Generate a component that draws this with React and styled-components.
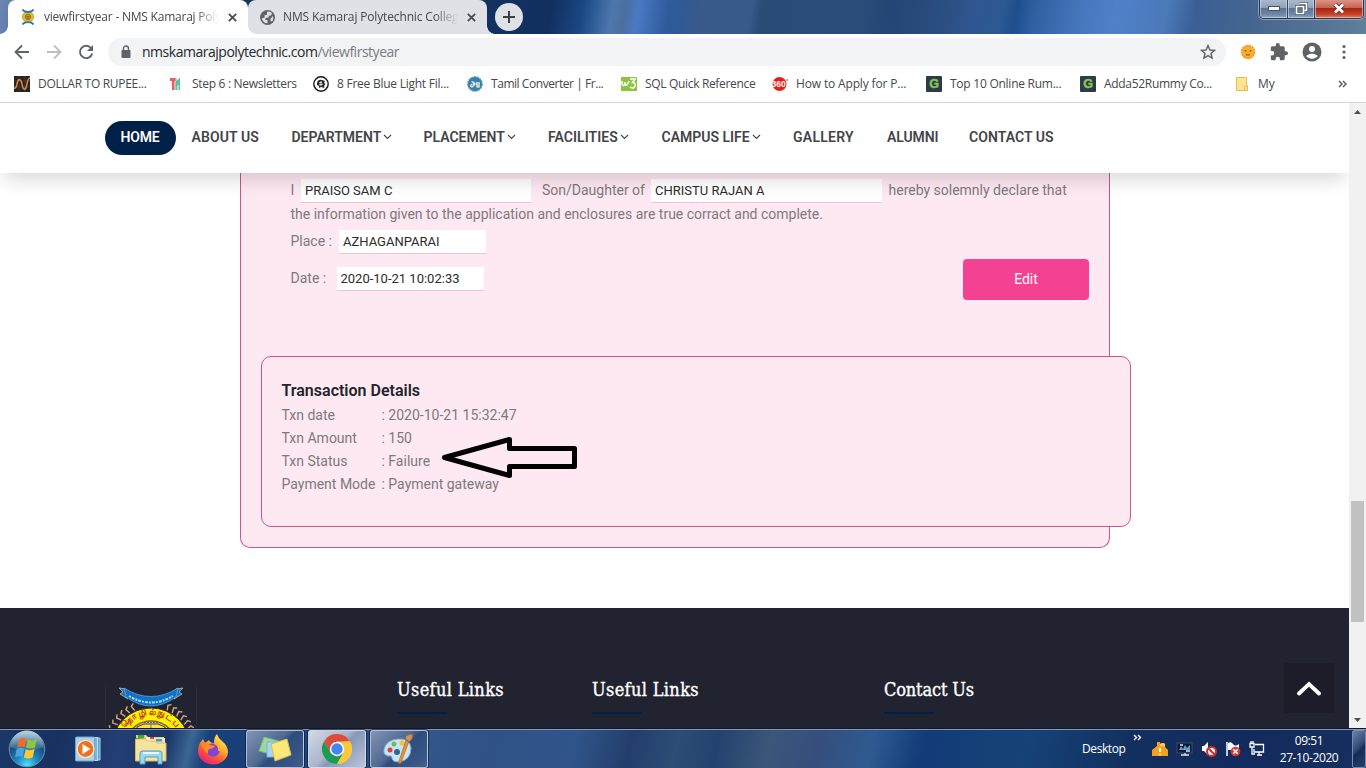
import React from "react";
import styled, { createGlobalStyle } from "styled-components";

const Global = createGlobalStyle`
  *{box-sizing:border-box}
  body{margin:0;overflow:hidden;background:#fff}
  svg{display:block;flex:none}
`;
const ui = `"Open Sans","Noto Sans",sans-serif`;

const Screen = styled.div`
  width:1366px;height:768px;display:flex;flex-direction:column;overflow:hidden;
  font-family:Roboto,sans-serif;
`;

/* ---------- browser chrome ---------- */
const TitleBar = styled.header`
  height:34px;flex:none;display:flex;padding-left:8px;font-family:${ui};
  background:linear-gradient(100deg,#6c86b4 0,#5c78aa 20px,#143264 240px,#12305f 545px,#1a4782 575px,#4d78ae 605px,#4a6f9f 618px,#4b7ac4 630px,#2e5b9c 660px,#2f5a96 674px,#395a8b 690px,#38598a 742px,#2a4b76 752px,#2b4d7a 850px,#244575 880px,#2b4e80 930px,#2f5690 960px,#2c5892 990px,#1d4e8d 1003px,#2f5f9f 1020px,#4474b8 1060px,#5080c8 1100px,#4b7aba 1150px,#3a5f94 1180px,#466690 1240px,#5c7c98 1340px,#6a8a9c 1366px);
`;
const Tab = styled.div`
  position:relative;width:${p => p.$w}px;height:34px;display:flex;align-items:center;
  padding:0 11px 0 ${p => p.$pl}px;background:${p => p.$bg};border-radius:8px 8px 0 0;
  &::before,&::after{content:"";position:absolute;bottom:0;width:8px;height:8px;z-index:2}
  &::before{left:-8px;background:radial-gradient(circle at 0 0,transparent 7.5px,${p => p.$bg} 8px);display:${p => p.$active ? "block" : "none"}}
  &::after{right:-8px;background:radial-gradient(circle at 100% 0,transparent 7.5px,${p => p.$bg} 8px)}
`;
const TabTitle = styled.span`
  width:${p => p.$w}px;margin-left:${p => p.$ml}px;overflow:hidden;white-space:nowrap;
  font-size:12px;line-height:18px;letter-spacing:${p => p.$ls}px;color:#45484c;
  mask-image:linear-gradient(90deg,#000 86%,transparent);
`;
const TabClose = styled.span`margin-left:auto;display:flex;`;
const NewTab = styled.div`
  width:28px;height:28px;border-radius:50%;background:#dee1e6;margin:3px 0 0 8px;
  display:grid;place-items:center;
`;
const WinButtons = styled.div`
  margin:-1px 2px 0 auto;width:105px;height:20px;display:flex;border:1px solid #26344a;border-top:0;
  border-radius:0 0 5px 5px;overflow:hidden;box-shadow:0 0 0 1px rgba(220,232,245,.45);
`;
const WinButton = styled.div`
  flex:0 0 ${p => p.$w}px;display:grid;place-items:center;border-right:1px solid #33435d;
  box-shadow:inset 0 0 0 1px rgba(225,233,243,.55);
  background:${p => p.$close
    ? "linear-gradient(#dc9b8f 0,#c9614e 46%,#a52613 50%,#c5402a 80%,#dc8062)"
    : "linear-gradient(#aebcd0 0,#8fa1ba 46%,#5d7493 50%,#6c87a6 80%,#8aa8c4)"};
  &:last-child{border-right:0;flex:1}
`;
const Toolbar = styled.div`
  height:36px;flex:none;display:flex;align-items:center;padding:0 12px 0 14px;background:#fff;font-family:${ui};
`;
const NavIcons = styled.div`display:flex;gap:16px;width:94px;`;
const Omnibox = styled.div`
  flex:none;width:1118px;height:28px;border-radius:14px;background:#f1f3f4;display:flex;align-items:center;
  padding:0 10px 0 12px;
`;
const Url = styled.span`
  font-size:14px;letter-spacing:${p => p.$ls}px;line-height:20px;color:#26282b;margin-left:10px;
  i{font-style:normal;color:#777b80}
`;
const Star = styled.span`margin-left:auto;`;
const Actions = styled.div`display:flex;align-items:center;margin-left:14px;gap:14px;`;
const Bookmarks = styled.div`
  height:33px;flex:none;display:flex;align-items:center;padding:0 18px 5px 14px;border-bottom:1px solid #d4d5d7;
  background:#fff;font-family:${ui};
`;
const Bookmark = styled.div`
  flex:0 0 ${p => p.$w}px;display:flex;align-items:center;gap:8px;font-size:12px;line-height:18px;
  color:#45484c;white-space:nowrap;letter-spacing:${p => p.$ls}px;
`;
const More = styled.span`margin-left:auto;`;

/* ---------- page ---------- */
const Viewport = styled.div`height:625px;flex:none;display:flex;overflow:hidden;`;
const Page = styled.main`flex:1;display:flex;flex-direction:column;background:#fff;min-width:0;overflow:hidden;`;
const Nav = styled.nav`
  position:relative;z-index:2;height:70px;flex:none;display:flex;align-items:center;padding-left:105px;
  background:#fff;box-shadow:0 10px 20px -4px rgba(0,0,0,.16);
`;
const NavItem = styled.a`
  height:34px;margin-top:-1px;display:flex;align-items:center;flex:0 0 ${p => p.$w}px;padding:0 0 2px 15.5px;gap:2px;
  font-size:14px;font-weight:600;letter-spacing:${p => p.$ls}px;white-space:nowrap;
  color:${p => p.$on ? "#fff" : "#434446"};background:${p => p.$on ? "#002147" : "transparent"};
  border-radius:17px;
`;
const Body = styled.section`height:435px;flex:none;padding-left:240px;`;
const FormCard = styled.div`
  width:870px;height:375px;border:1px solid #ca5590;border-top:0;border-radius:0 0 10px 10px;background:#fee8f2;
  color:#7d7a7d;font-size:14px;
`;
const Declaration = styled.div`height:183px;padding:5px 20px 0 49.5px;display:flex;flex-direction:column;`;
const Line = styled.div`
  height:${p => p.$h}px;display:flex;align-items:center;white-space:nowrap;
`;
const Label = styled.span`flex:0 0 ${p => p.$w}px;letter-spacing:${p => p.$ls || 0}px;`;
const Field = styled.input`
  width:${p => p.$w}px;height:24px;margin:2px ${p => p.$mr || 0}px 0 0;border:0;border-bottom:1px solid #eec4d8;
  background:#fff;padding:0 4px;font:13px Roboto,sans-serif;color:#2b2b2b;outline:0;border-radius:0;
`;
const Columns = styled.div`display:flex;justify-content:space-between;align-items:flex-start;`;
const EditButton = styled.button`
  width:126px;height:41px;margin-top:33px;padding:0 0 2px;border:0;border-radius:4px;background:#f44292;color:#fff;
  font:14px Roboto,sans-serif;
`;
const TxnCard = styled.div`
  position:relative;width:870px;height:171px;margin-left:20px;border:1px solid #ca5590;border-radius:10px;
  background:#fee8f2;padding:22px 20px 22px 19.5px;
`;
const TxnTitle = styled.h4`margin:0 0 1px;font-size:16px;line-height:24px;font-weight:600;color:#212529;`;
const TxnRow = styled.div`
  display:grid;grid-template-columns:100px 1fr;font-size:14px;line-height:23px;
`;
const Arrow = styled.svg`position:absolute;left:179px;top:79px;`;

const Footer = styled.footer`
  position:relative;height:120px;flex:none;background:#222330;display:flex;padding-left:105px;
`;
const LogoBox = styled.div`
  width:92px;height:48px;margin:78px 200px 0 0;border:solid #2b2c38;border-width:0 1px;overflow:hidden;
`;
const FooterCol = styled.div`flex:0 0 ${p => p.$w}px;padding-top:70px;`;
const FooterTitle = styled.h3`
  margin:0;font:400 18px/24px "DejaVu Serif Condensed","DejaVu Serif",serif;letter-spacing:${p => p.$ls}px;color:#fff;
  white-space:nowrap;-webkit-text-stroke:.35px #fff;
  &::after{content:"";display:block;width:50px;height:2px;margin-top:10px;background:#002147}
`;
const ToTop = styled.div`
  position:absolute;right:15px;top:55px;width:50px;height:50px;background:#1c1d29;display:grid;place-items:center;
`;
const Scrollbar = styled.div`
  width:17px;flex:none;background:#f1f1f1;display:flex;flex-direction:column;align-items:center;
`;
const ScrollTrack = styled.div`flex:1;width:13px;padding-top:381px;`;
const Thumb = styled.div`height:121px;background:#c1c1c1;`;
const ScrollArrow = styled.div`height:17px;display:grid;place-items:center;`;

/* ---------- taskbar ---------- */
const Taskbar = styled.div`
  height:40px;flex:none;display:flex;align-items:center;border-top:1px solid #10182a;box-shadow:inset 0 1px 0 #8796b4;
  color:#fff;font-family:${ui};padding-left:8px;
  background:linear-gradient(104deg,#1a3768 0,#17325f 60px,#233e74 120px,#1b3668 165px,#3b6693 188px,#17407a 205px,#1a3f75 260px,#33568a 420px,#2f5186 480px,#30558a 560px,#233e6c 615px,#2c4d74 660px,#24426e 700px,#3a5679 750px,#354f7d 800px,#2e5a91 850px,#123b77 900px,#164278 1000px,#12305f 1100px,#132b5c 1200px,#17305f 1366px);
`;
const Launch = styled.div`flex:0 0 ${p => p.$w}px;display:flex;justify-content:center;`;
const PinnedApps = styled.div`display:flex;align-items:center;width:238px;flex:none;`;
const TaskButton = styled.div`
  width:58px;height:38px;margin:1px 4px 0 0;flex:none;display:grid;place-items:center;border-radius:3px;
  border:1px solid rgba(215,226,243,.75);
  box-shadow:0 0 0 1px rgba(10,20,45,.6);
  background:${p => p.$on
    ? "linear-gradient(135deg,#d3d9e6 0,#a9b5cd 45%,#8797b8 55%,#bcc6da 100%)"
    : "linear-gradient(135deg,#8494b3 0,#4f6994 45%,#2e4d7d 55%,#3f5c8a 100%)"};
`;
const Tray = styled.div`margin-left:auto;display:flex;align-items:center;height:38px;font-size:12px;`;
const Desktop = styled.span`letter-spacing:${p => p.$ls}px;width:51px;`;
const TrayChevron = styled.span`align-self:flex-start;padding-top:4px;width:19px;`;
const TrayIcons = styled.div`display:flex;gap:8px;`;
const Clock = styled.div`
  width:86px;text-align:center;line-height:17px;letter-spacing:${p => p.$ls}px;margin-left:1px;
`;
const ShowDesktop = styled.div`
  width:14px;height:38px;border:1px solid #7389ad;border-radius:2px;
  background:linear-gradient(135deg,#6d83a7,#304b7a 45%,#142c5a 55%,#26406d);
`;

const stroke = (d, w = 2, c = "#5f6368") => <path d={d} fill="none" stroke={c} strokeWidth={w} />;

const Emblem = ({ size = 16 }) => (
  <svg width={size} height={size} viewBox="0 0 16 16">
    <circle cx="8" cy="8" r="5.500" fill="#e8c41f" stroke="#b98f1c" strokeWidth=".8" />
    <circle cx="8" cy="8" r="2.800" fill="#c8962f" stroke="#806227" strokeWidth=".8" />
    <path d="M6.500 7.500h3M7 9.200h2" stroke="#685a30" strokeWidth=".8" />
    <path d="M2.500.5Q4 3 8 3T13.500.5M2.500 15.500Q4 13.200 8 13.200T13.500 15.500" fill="none" stroke="#2f76b3" strokeWidth="1.800" />
  </svg>
);
const Close = () => <svg width="9" height="9" viewBox="0 0 9 9">{stroke("M.8.8 8.200 8.200M8.200.8.8 8.200", 1.7, "#45484c")}</svg>;
const Globe = () => (
  <svg width="15" height="15" viewBox="0 0 16 16">
    <circle cx="8" cy="8" r="8" fill="#5f6368" />
    <path d="M7.500 1.800Q11 1.200 12.800 3.500L11.500 6 9.500 5.800 9.200 8 6 8.500 5.500 10.500 8 11V14.200Q3 14 1.900 8.800L5 8 4.800 5.500 7.500 5ZM13.800 6.500Q15 10 12.500 12.500L10.800 10.500 12 8.500Z" fill="#dee1e6" />
  </svg>
);

const marks = {
  dollar: <svg width="16" height="16"><rect width="16" height="16" fill="#262423" /><path d="M0 5h16M0 11h16M5 0v16M11 0v16" stroke="#504a43" strokeWidth=".6" /><path d="M0 12Q2 13 3 8T5 4Q7 3 8 8T10 13Q12 14 13 8T16 2" fill="none" stroke="#e8833a" strokeWidth="1.500" /></svg>,
  th: <svg width="16" height="16"><path d="M2 2h5.500v3H6.500v9H4V5H2Z" fill="#ed5a5f" /><path d="M7.300 6V14H9.500V9.500L10.500 8.500V14H12V1.500L8.500 5V2H7.500Z" fill="#58c1a5" /></svg>,
  head: <svg width="16" height="16"><circle cx="8" cy="8" r="7.200" fill="#fff" stroke="#151515" strokeWidth="1.400" /><path d="M4 7Q5 3 9 4L12 5 11 7 12.500 8 11 10 11.500 12 8 11 6 12 6 10 4 9Z" fill="#262626" /><path d="M6 7 9 6M6 9 10 8M8 5v5" stroke="#ddd" /></svg>,
  tamil: <svg width="16" height="16"><circle cx="8" cy="8" r="7.300" fill="#397fa8" stroke="#6ba5c3" strokeWidth="1.300" strokeDasharray="2 1" /><path d="M5.500 8Q3 9 4 10.500T7 9Q7 5 4.500 6M7 10V6M7 8h3M10 6v5H12V6" fill="none" stroke="#fff" strokeWidth="1.200" /></svg>,
  w3: <svg width="16" height="14"><rect width="16" height="14" fill="#8bc540" /><path d="M1 4V7Q2.500 10 4 7V5M4 7Q5.500 10 7.500 5L8 4M9 2H14L11.500 5.500Q15 5.500 14 9T9 10" fill="none" stroke="#fff" strokeWidth="1.500" /></svg>,
  r360: <svg width="16" height="16"><circle cx="7.500" cy="8" r="7" fill="#e71d17" /><text x="-.5" y="11" fontFamily="Liberation Sans" fontWeight="700" fontSize="8.500" fill="#fff" textLength="14">360</text><circle cx="15" cy="4" r=".8" fill="#e71d17" /></svg>,
  g: <svg width="16" height="16"><rect width="16" height="16" rx="1" fill="#2b3b4b" /><text x="8" y="12.300" textAnchor="middle" fontFamily="Liberation Sans" fontWeight="700" fontSize="12.500" fill="#86c34f" stroke="#86c34f" strokeWidth=".5">G</text></svg>,
  folder: <svg width="16" height="16"><path d="M2.500 1.500h10v8h1v5h-11Z" fill="#ffe493" stroke="#e2bd50" /><path d="M10.500 14V10.500h2" fill="none" stroke="#e2bd50" /></svg>,
};
const bookmarks = [
  ["dollar", "DOLLAR TO RUPEE...", 154, -0.3],
  ["th", "Step 6 : Newsletters", 145, -0.3],
  ["head", "8 Free Blue Light Fil...", 154, -0.25],
  ["tamil", "Tamil Converter | Fr...", 154, -0.45],
  ["w3", "SQL Quick Reference", 151, -0.33],
  ["r360", "How to Apply for P...", 154, -0.15],
  ["g", "Top 10 Online Rum...", 154, -0.25],
  ["g", "Adda52Rummy Co...", 154, -0.3],
  ["folder", "My", 60, -0.1],
];
const menu = [
  ["HOME", 71, -0.15, false], ["ABOUT US", 100, 0.1, false], ["DEPARTMENT", 132, 0, true], ["PLACEMENT", 124.5, 0, true],
  ["FACILITIES", 113.5, 0.05, true], ["CAMPUS LIFE", 131.5, 0, true], ["GALLERY", 94, 0.25, false], ["ALUMNI", 82, -0.1, false], ["CONTACT US", 110, 0.05, false],
];

const Logo = () => (
  <svg width="92" height="48" viewBox="0 0 92 48">
    <defs><path id="arc" d="M14 60A31 31 0 0 1 76 60" /></defs>
    <g stroke="#d0a487" strokeWidth="1.400">
      {[-72, -64, -56, -48, -40, -32, -24, 24, 32, 40, 48, 56, 64, 72].map(a => (
        <path key={a} d="M45 21 43.500 16 46.500 14" fill="none" transform={`rotate(${a} 45 61)`} />
      ))}
    </g>
    <circle cx="45" cy="61" r="39" fill="#fff200" stroke="#342f3c" />
    <circle cx="45" cy="61" r="26" fill="#ddc59a" stroke="#8d651e" strokeWidth="1.500" />
    <path d="M31 48V41L38 38H52L59 41V48Z" fill="#f5e34a" stroke="#514421" />
    <path d="M36 43h18M45 38v10" stroke="#8a7a26" strokeWidth="1" />
    <path d="M38 36.500h14" stroke="#5376a0" strokeWidth="1" strokeDasharray="2 1" />
    <text fontFamily='"Noto Sans",sans-serif' fontSize="8.500" fontWeight="700" fill="#b52b18"><textPath href="#arc" startOffset="9" textLength="76">ர் தொழில்நுட்பக்</textPath></text>
    <path d="M13 2 20 3 22 8 20 11 22 13 14 8 17 6ZM77 2 70 3 68 8 70 11 68 13 76 8 73 6Z" fill="#2571a8" stroke="#b5cdd3" strokeWidth=".7" />
    <path d="M18 2Q45 19 72 2L70 11Q45 29 20 11Z" fill="#1171c7" stroke="#63aee0" strokeWidth=".7" />
    <path d="M23 10Q45 23 67 10" fill="none" stroke="#a8d6f5" strokeWidth="2" strokeDasharray="2 1 3 1" />
  </svg>
);

const StartOrb = () => (
  <svg width="38" height="38" viewBox="0 0 38 38">
    <defs>
      <radialGradient id="orb" cx=".5" cy=".95" r=".9"><stop offset="0" stopColor="#4fe0ff" /><stop offset=".35" stopColor="#1d87bd" /><stop offset=".7" stopColor="#174e82" /><stop offset="1" stopColor="#6f94ae" /></radialGradient>
      <linearGradient id="gloss" x2="0" y2="1"><stop stopColor="#d7e7ee" stopOpacity=".75" /><stop offset="1" stopColor="#8fb4c9" stopOpacity=".2" /></linearGradient>
    </defs>
    <circle cx="19" cy="19" r="17.800" fill="url(#orb)" stroke="#6f8fa8" />
    <path d="M2.500 17A16.500 16.500 0 0 1 35.500 17Q19 24 2.500 17Z" fill="url(#gloss)" />
    <path d="M11 9.500Q14.500 7 18.500 9L16.700 17.200Q13 15.500 9 17.500Z" fill="#ee6b2b" />
    <path d="M19.800 9.500Q24 11.500 29 9L27 17.500Q22.500 19.500 18 17.600Z" fill="#8fc63e" />
    <path d="M8.700 19Q12.500 16.900 16.400 18.700L14.500 27Q11 25.300 7 27.200Z" fill="#49a5e1" />
    <path d="M17.700 19.200Q22 21.200 26.600 19L24.700 27.500Q20.500 29.500 15.800 27.600Z" fill="#fdc92f" />
  </svg>
);
const MediaPlayer = () => (
  <svg width="28" height="28" viewBox="0 0 28 28">
    <path d="M20 3h6v22h-6Z" fill="#5aa0d0" stroke="#a9d6ef" /><path d="M18 2.500h5.500v23H18Z" fill="#77b5dc" stroke="#c0e1f3" />
    <rect x="1.500" y="2" width="19" height="24" rx="1" fill="#b1cfe2" stroke="#6ba7cd" />
    <circle cx="11.500" cy="14" r="8.500" fill="#ee7321" stroke="#fff0df" strokeWidth="1.200" /><path d="M8.500 9v10l8-5Z" fill="#fff" />
  </svg>
);
const Explorer = () => (
  <svg width="34" height="32" viewBox="0 0 34 32">
    <path d="M2 5V2h10l2 2h16v4Z" fill="#e3ca74" /><rect x="4" y="2" width="6" height="3" fill="#3caa36" /><rect x="12" y="4" width="8" height="4" fill="#f8f3df" /><rect x="16" y="4" width="4" height="2" fill="#dd4b2a" /><path d="M20 5h11v5H20Z" fill="#f4e7aa" /><rect x="22" y="6" width="6" height="2.500" fill="#3b9bd6" />
    <path d="M1.500 6h10l2 2h7l2 2h9.500v18h-30.500Z" fill="#f7e39b" stroke="#d5b961" />
    <path d="M6 31V20Q6 18 9 18H25Q28 18 28 20V31H24V24H11V31Z" fill="#9bd7ef" stroke="#4f9fca" /><path d="M9 20h16" stroke="#e4f8ff" strokeWidth="2" />
  </svg>
);
const Firefox = () => (
  <svg width="32" height="32" viewBox="0 0 32 32">
    <defs><linearGradient id="fx" x1=".85" x2=".2" y2="1"><stop stopColor="#fff44f" /><stop offset=".35" stopColor="#ffb52e" /><stop offset=".65" stopColor="#ff5a36" /><stop offset="1" stopColor="#e31587" /></linearGradient></defs>
    <path d="M20 1Q21 5 25 8 31 13 31 19A15 13 0 0 1 1 18Q1 11 6 6L8 10 12 7Q13 10 17 10 17 4 20 1Z" fill="url(#fx)" />
    <circle cx="16" cy="17" r="6.800" fill="#8544cf" /><path d="M4 10Q9 8 13 12L18 13Q16 16 12 16 10 18 11 21 5 17 4 10Z" fill="#ff8a25" /><path d="M17 10Q23 12 22 18" stroke="#ffad31" strokeWidth="2" fill="none" />
  </svg>
);
const Notes = () => (
  <svg width="34" height="28" viewBox="0 0 34 28">
    <path d="M6 2 21 6 16 20 1 16Z" fill="#9bd89b" stroke="#6bb982" /><path d="M9 7H23V22H9Z" fill="#a7d5f5" stroke="#76b3dc" /><path d="M13 9 29 4 33 20 17 26Z" fill="#fbe77a" stroke="#d7bd4f" />
  </svg>
);
const Chrome = () => (
  <svg width="30" height="30" viewBox="0 0 30 30">
    <circle cx="15" cy="15" r="15" fill="#fbc93c" /><path d="M2 7.500A15 15 0 0 1 28 7.500H15L8.500 18.750Z" fill="#dd4b3e" /><path d="M2 7.500 8.500 18.750 15 22.500 21.500 18.750 15 30A15 15 0 0 1 2 7.500Z" fill="#1a9b57" /><path d="M28 7.500A15 15 0 0 1 15 30L21.500 18.750V7.500Z" fill="#fbc93c" />
    <circle cx="15" cy="15" r="7.200" fill="#fff" /><circle cx="15" cy="15" r="5.700" fill="#4286ee" />
  </svg>
);
const Paint = () => (
  <svg width="34" height="32" viewBox="0 0 34 32">
    <path d="M16 6Q28 5 29 15 29 27 17 29 10 29 10 25 10 22 6 23 1 22 2 16 4 7 16 6Z" fill="#c9e4f2" stroke="#7ba9c5" />
    <circle cx="8" cy="17" r="2.500" fill="#d64440" /><circle cx="12" cy="11" r="2.500" fill="#77b94c" /><circle cx="20" cy="10" r="2.500" fill="#efc33b" /><circle cx="15" cy="19" r="3" fill="#346495" />
    <path d="M27 8 19 30 17 31 17 28 24 7Z" fill="#e49237" stroke="#a96023" strokeWidth=".6" /><path d="M23 6Q23 1 31 1 31 7 27 9Z" fill="#c99062" stroke="#8a6144" />
  </svg>
);

export default function App() {
  return (
    <Screen>
      <Global />
      <TitleBar>
        <Tab $active $w={240} $pl={12} $bg="#fff">
          <Emblem />
          <TabTitle $w={175} $ml={8} $ls={-0.22}>viewfirstyear - NMS Kamaraj Polytechnic</TabTitle>
          <TabClose><Close /></TabClose>
        </Tab>
        <Tab $w={239} $pl={12} $bg="#dee1e6">
          <Globe />
          <TabTitle $w={175} $ml={8} $ls={-0.15}>NMS Kamaraj Polytechnic College</TabTitle>
          <TabClose><Close /></TabClose>
        </Tab>
        <NewTab><svg width="12" height="12">{stroke("M6 0v12M0 6h12", 2, "#3c4043")}</svg></NewTab>
        <WinButtons>
          <WinButton $w={28}><svg width="12" height="5"><rect x=".5" y=".5" width="11" height="4" fill="#fff" stroke="#46546a" /></svg></WinButton>
          <WinButton $w={27}><svg width="13" height="13"><path d="M4.500 1.500h7v7h-2M1.500 4.500h7v7h-7Z" fill="none" stroke="#46546a" strokeWidth="3" /><path d="M4.500 1.500h7v7h-2M1.500 4.500h7v7h-7Z" fill="none" stroke="#fff" strokeWidth="1.700" /></svg></WinButton>
          <WinButton $close><svg width="12" height="11"><path d="M2 1.500 10 9.500M10 1.500 2 9.500" stroke="#5b3436" strokeWidth="4.500" /><path d="M2 1.500 10 9.500M10 1.500 2 9.500" stroke="#fff" strokeWidth="2.700" /></svg></WinButton>
        </WinButtons>
      </TitleBar>
      <Toolbar>
        <NavIcons>
          <svg width="16" height="16">{stroke("M15 8H2M8 1.500 1.500 8 8 14.500", 1.8)}</svg>
          <svg width="16" height="16">{stroke("M1 8h13M8 1.500 14.500 8 8 14.500", 1.8, "#bcbec1")}</svg>
          <svg width="16" height="16">{stroke("M13 4A6.200 6.200 0 1 0 14.200 9.500", 1.9)}<path d="M15 1v6H9Z" fill="#5f6368" /></svg>
        </NavIcons>
        <Omnibox>
          <svg width="12" height="14"><rect x="1.500" y="5" width="9" height="8" rx="1" fill="#5f6368" />{stroke("M3.500 6V3.500a2.500 2.500 0 0 1 5 0V6", 1.4)}</svg>
          <Url $ls={-0.48}>nmskamarajpolytechnic.com<i>/viewfirstyear</i></Url>
          <Star><svg width="16" height="16" viewBox="0 0 16 16">{stroke("M8 1.500 9.900 6 14.600 6.400 11 9.500 12.100 14.100 8 11.600 3.900 14.100 5 9.500 1.400 6.400 6.100 6Z", 1.4)}</svg></Star>
        </Omnibox>
        <Actions>
          <svg width="16" height="16"><circle cx="8" cy="8" r="6.500" fill="#fbad2b" stroke="#f39a25" strokeWidth="1.600" strokeDasharray="2 .6" /><path d="M4.500 6.800h2M9.500 6.800h2M6 10.500q2 1 4 0" stroke="#9c5510" strokeWidth="1.200" fill="none" /></svg>
          <svg width="18" height="18" viewBox="1 1 22 22"><path fill="#5f6368" d="M20.500 11H19V7c0-1.100-.9-2-2-2h-4V3.500a2.500 2.500 0 0 0-5 0V5H4c-1.100 0-2 .9-2 2v3.800h1.500a2.700 2.700 0 0 1 0 5.400H2V20c0 1.100.9 2 2 2h3.800v-1.500a2.700 2.700 0 0 1 5.400 0V22H17c1.100 0 2-.9 2-2v-4h1.500a2.500 2.500 0 0 0 0-5Z" /></svg>
          <svg width="20" height="20"><circle cx="10" cy="10" r="9.500" fill="#5f6368" /><circle cx="10" cy="7" r="3" fill="#fff" /><path d="M4 14q6-5 12 0-6 6-12 0" fill="#fff" /></svg>
          <svg width="16" height="16"><g fill="#5f6368"><circle cx="8" cy="2.500" r="1.600" /><circle cx="8" cy="8" r="1.600" /><circle cx="8" cy="13.500" r="1.600" /></g></svg>
        </Actions>
      </Toolbar>
      <Bookmarks>
        {bookmarks.map(([icon, text, w, ls]) => <Bookmark key={text} $w={w} $ls={ls}>{marks[icon]}<span>{text}</span></Bookmark>)}
        <More><svg width="10" height="8">{stroke("M1 1 4 4 1 7M5 1 8 4 5 7", 1.5)}</svg></More>
      </Bookmarks>

      <Viewport>
        <Page>
          <Nav>
            {menu.map(([text, w, ls, sub], i) => (
              <NavItem key={text} $on={i === 0} $w={w} $ls={ls}>
                <span>{text}</span>
                {sub && <svg width="9" height="6">{stroke("M1 1 4.500 4.500 8 1", 1.1, "#434446")}</svg>}
              </NavItem>
            ))}
          </Nav>
          <Body>
            <FormCard>
              <Declaration>
                <Line $h={24}>
                  <Label $w={10.5}>I</Label><Field $w={230} $mr={11} readOnly value="PRAISO SAM C" />
                  <Label $w={109}>Son/Daughter of</Label><Field $w={230.5} $mr={7} readOnly value="CHRISTU RAJAN A" />
                  <Label $w={180}>hereby solemnly declare that</Label>
                </Line>
                <Line $h={24}>the information given to the application and enclosures are true corract and complete.</Line>
                <Columns>
                  <div>
                    <Line $h={30}><Label $w={48.5}>Place :</Label><Field $w={147} readOnly value="AZHAGANPARAI" /></Line>
                    <Line $h={44}><Label $w={46}>Date :</Label><Field $w={147.5} readOnly value="2020-10-21 10:02:33" /></Line>
                  </div>
                  <EditButton>Edit</EditButton>
                </Columns>
              </Declaration>
              <TxnCard>
                <TxnTitle>Transaction Details</TxnTitle>
                <TxnRow><span>Txn date</span><span>: 2020-10-21 15:32:47</span></TxnRow>
                <TxnRow><span>Txn Amount</span><span>: 150</span></TxnRow>
                <TxnRow><span>Txn Status</span><span>: Failure</span></TxnRow>
                <TxnRow><span>Payment Mode</span><span>: Payment gateway</span></TxnRow>
                <Arrow width="140" height="44" viewBox="441 436 140 44">
                  <path d="M444.500 457.500 509.500 439.500V448.500H574.500V466.500H509.500V475.500Z" fill="none" stroke="#000" strokeWidth="5" strokeLinejoin="round" />
                </Arrow>
              </TxnCard>
            </FormCard>
          </Body>
          <Footer>
            <LogoBox><Logo /></LogoBox>
            <FooterCol $w={195}><FooterTitle $ls={0.35}>Useful Links</FooterTitle></FooterCol>
            <FooterCol $w={292}><FooterTitle $ls={0.35}>Useful Links</FooterTitle></FooterCol>
            <FooterCol $w={200}><FooterTitle $ls={-0.15}>Contact Us</FooterTitle></FooterCol>
            <ToTop><svg width="26" height="16"><path d="M3 13.500 13 4 23 13.500" fill="none" stroke="#fff" strokeWidth="3.800" strokeLinecap="round" /></svg></ToTop>
          </Footer>
        </Page>
        <Scrollbar>
          <ScrollArrow><svg width="7" height="4"><path d="M0 4 3.500 0 7 4Z" fill="#505050" /></svg></ScrollArrow>
          <ScrollTrack><Thumb /></ScrollTrack>
          <ScrollArrow><svg width="7" height="4"><path d="M0 0h7L3.500 4Z" fill="#505050" /></svg></ScrollArrow>
        </Scrollbar>
      </Viewport>

      <Taskbar>
        <PinnedApps>
          <Launch $w={38}><StartOrb /></Launch>
          <Launch $w={84}><MediaPlayer /></Launch>
          <Launch $w={42}><Explorer /></Launch>
          <Launch $w={82}><Firefox /></Launch>
        </PinnedApps>
        <TaskButton><Notes /></TaskButton>
        <TaskButton $on><Chrome /></TaskButton>
        <TaskButton><Paint /></TaskButton>
        <Tray>
          <Desktop $ls={-0.4}>Desktop</Desktop>
          <TrayChevron><svg width="9" height="7">{stroke("M1 1 3.500 3.500 1 6M5 1 7.500 3.500 5 6", 1.4, "#fff")}</svg></TrayChevron>
          <TrayIcons>
            <svg width="16" height="16"><path d="M0 9 5 5V1H8V3Q11 1 13 3V6L16 9V15H0Z" fill="#f3a01d" /><path d="M8 3Q11 1 13 3V6Q11 4 8 6Z" fill="#fccb5c" /><path d="M8 7v4M8 12.500v1.500" stroke="#fff" strokeWidth="1.800" /></svg>
            <svg width="17" height="16"><rect x="1" y="2" width="15" height="10" fill="#101828" stroke="#3c516e" /><path d="M3 9 5 5 7 8 9 4 11 7 14 4V9Z" fill="#58a0dc" /><path d="M5 14h8M9 12v2M4 4h3M10 10h4" stroke="#dce5ee" strokeWidth="1.300" /></svg>
            <svg width="16" height="16"><path d="M1 5H3L7 1V14L3 10H1Z" fill="#fff" /><circle cx="10.500" cy="10.500" r="4.500" fill="#fff" stroke="#d22d2d" strokeWidth="2" /><path d="m7.500 7.500 6 6" stroke="#d22d2d" strokeWidth="2" /></svg>
            <svg width="16" height="16"><path d="M2 1v14" stroke="#fff" strokeWidth="1.500" /><path d="M3 2Q6 0 8 3T14 3V9H3Z" fill="#fff" /><circle cx="10.500" cy="10.500" r="4.800" fill="#d93a36" /><path d="m8.300 8.300 4.400 4.400m0-4.400-4.400 4.400" stroke="#fff" strokeWidth="1.500" /></svg>
            <svg width="16" height="16"><path d="M6 3.500h8.500v7.500H5V8M8 14h5M10 11v3M1 2.500h4v3.500H1ZM2 0v2M4 0v2M3 6v7h3" fill="none" stroke="#fff" strokeWidth="1.300" /></svg>
          </TrayIcons>
          <Clock $ls={-0.4}>09:51<br />27-10-2020</Clock>
          <ShowDesktop />
        </Tray>
      </Taskbar>
    </Screen>
  );
}
